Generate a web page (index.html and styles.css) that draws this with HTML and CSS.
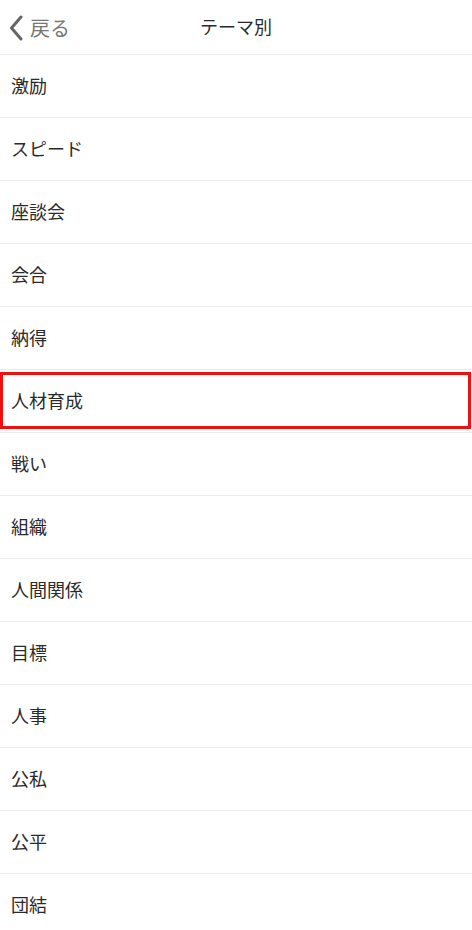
FILE: index.html
```html
<!DOCTYPE html>
<html lang="ja">
<head>
  <meta charset="UTF-8">
  <meta name="viewport" content="width=device-width, initial-scale=1.0">
  <title>テーマ別</title>
  <link rel="stylesheet" href="styles.css">
</head>
<body>
  <header class="nav">
    <a class="back" href="#">
      <svg class="chevron" width="14" height="26" viewBox="0 0 14 26">
        <path d="M12 2 L2.5 13 L12 24" fill="none" stroke="#666" stroke-width="3" stroke-linecap="round" stroke-linejoin="round"/>
      </svg>
      <span>戻る</span>
    </a>
    <h1 class="title">テーマ別</h1>
  </header>

  <ul class="list">
    <li class="row">激励</li>
    <li class="row">スピード</li>
    <li class="row">座談会</li>
    <li class="row">会合</li>
    <li class="row">納得</li>
    <li class="row highlight">人材育成</li>
    <li class="row">戦い</li>
    <li class="row">組織</li>
    <li class="row">人間関係</li>
    <li class="row">目標</li>
    <li class="row">人事</li>
    <li class="row">公私</li>
    <li class="row">公平</li>
    <li class="row">団結</li>
  </ul>
</body>
</html>
```

FILE: styles.css
```css
* {
  box-sizing: border-box;
}

body {
  margin: 0;
  background: #fff;
  color: #2a2a2a;
  font-family: "Noto Sans CJK JP", "Noto Sans", sans-serif;
}

.nav {
  position: relative;
  height: 55px;
  border-bottom: 1px solid #ebebeb;
  display: flex;
  align-items: center;
  justify-content: center;
}

.back {
  position: absolute;
  left: 9px;
  top: 13px;
  display: flex;
  align-items: center;
  gap: 7px;
  color: #777;
  text-decoration: none;
  font-size: 20px;
}

.chevron {
  display: block;
}

.title {
  margin: 0 0 2px;
  font-size: 18px;
  font-weight: normal;
}

.list {
  list-style: none;
  margin: 0;
  padding: 0;
}

.row {
  position: relative;
  height: 63px;
  border-bottom: 1px solid #ebebeb;
  display: flex;
  align-items: center;
  padding: 0 0 3px 11px;
  font-size: 18px;
}

.highlight::after {
  content: "";
  position: absolute;
  left: 0;
  right: 1px;
  top: 2px;
  bottom: 3px;
  border: 3.5px solid #f01010;
}
```
